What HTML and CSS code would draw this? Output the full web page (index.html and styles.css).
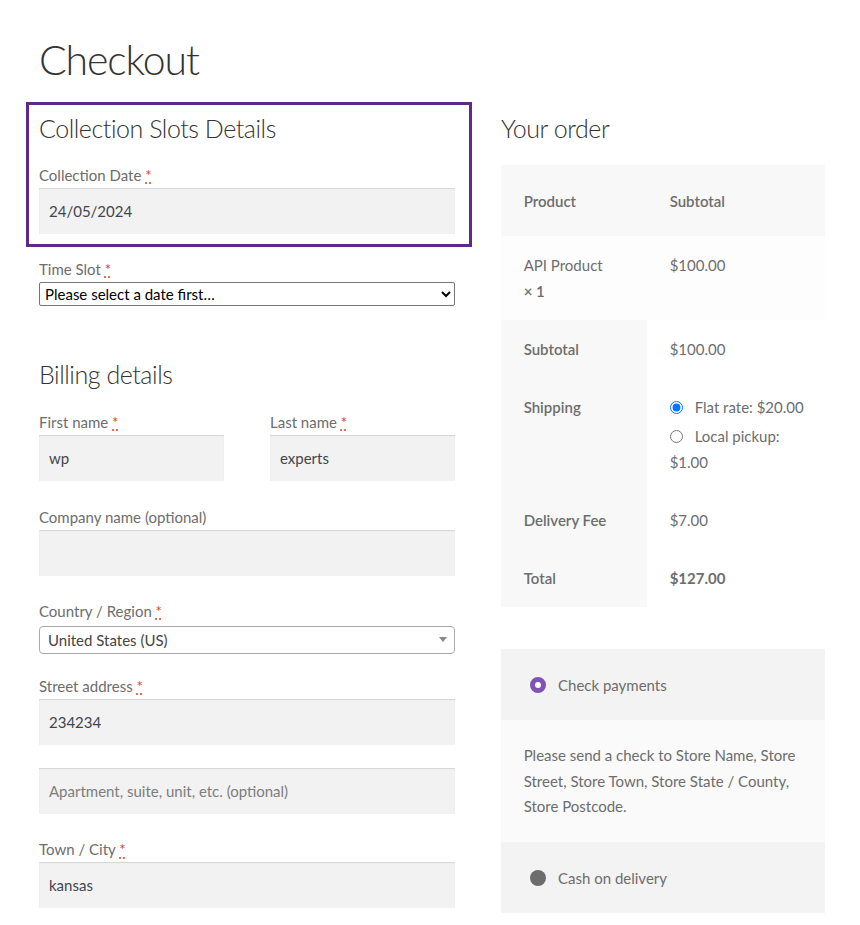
FILE: index.html
```html
<!DOCTYPE html>
<html lang="en">
<head>
<meta charset="utf-8">
<title>Checkout</title>
<link rel="stylesheet" href="styles.css">
</head>
<body>
<div class="page">
  <h1 class="page-title">Checkout</h1>
  <div class="cols">
    <div class="col-left">
      <div class="slots-box">
        <h3 class="section-title">Collection Slots Details</h3>
        <div class="form-row">
          <label class="field-label">Collection Date&nbsp;<abbr class="req" title="required">*</abbr></label>
          <div class="input">24/05/2024</div>
        </div>
      </div>
      <div class="form-row row-timeslot">
        <label class="field-label">Time Slot <abbr class="req" title="required">*</abbr></label>
        <select class="native-select"><option>Please select a date first…</option></select>
      </div>

      <h3 class="section-title billing-title">Billing details</h3>
      <div class="name-row">
        <div class="form-row">
          <label class="field-label">First name <abbr class="req" title="required">*</abbr></label>
          <div class="input">wp</div>
        </div>
        <div class="form-row">
          <label class="field-label">Last name <abbr class="req" title="required">*</abbr></label>
          <div class="input">experts</div>
        </div>
      </div>
      <div class="form-row">
        <label class="field-label">Company name (optional)</label>
        <div class="input"></div>
      </div>
      <div class="form-row row-country">
        <label class="field-label">Country / Region <abbr class="req" title="required">*</abbr></label>
        <div class="select2">
          <span class="select2-text">United States (US)</span>
          <span class="select2-arrow"></span>
        </div>
      </div>
      <div class="form-row row-street">
        <label class="field-label">Street address <abbr class="req" title="required">*</abbr></label>
        <div class="input">234234</div>
      </div>
      <div class="form-row">
        <div class="input placeholder">Apartment, suite, unit, etc. (optional)</div>
      </div>
      <div class="form-row">
        <label class="field-label">Town / City <abbr class="req" title="required">*</abbr></label>
        <div class="input">kansas</div>
      </div>
    </div>

    <div class="col-right">
      <h3 class="section-title order-title">Your order</h3>
      <table class="order-table">
        <thead>
          <tr><th class="c1">Product</th><th class="c2">Subtotal</th></tr>
        </thead>
        <tbody>
          <tr><td class="c1">API Product<br><strong class="qty">× 1</strong></td><td class="c2">$100.00</td></tr>
        </tbody>
        <tfoot>
          <tr><th>Subtotal</th><td>$100.00</td></tr>
          <tr>
            <th>Shipping</th>
            <td>
              <ul class="ship-list">
                <li><input type="radio" name="ship" checked><label>Flat rate: $20.00</label></li>
                <li><input type="radio" name="ship"><label>Local pickup: $1.00</label></li>
              </ul>
            </td>
          </tr>
          <tr><th>Delivery Fee</th><td>$7.00</td></tr>
          <tr><th>Total</th><td><strong>$127.00</strong></td></tr>
        </tfoot>
      </table>

      <div class="payment">
        <div class="pay-method">
          <span class="pay-radio selected"></span>
          <span>Check payments</span>
        </div>
        <div class="pay-box">Please send a check to Store Name, Store Street, Store Town, Store State / County, Store Postcode.</div>
        <div class="pay-method">
          <span class="pay-radio"></span>
          <span>Cash on delivery</span>
        </div>
      </div>
    </div>
  </div>
</div>
</body>
</html>
```

FILE: styles.css
```css
* { box-sizing: border-box; }

html, body {
  margin: 0;
  padding: 0;
  background: #fff;
}

body {
  font-family: "Lato", "Open Sans", sans-serif;
  font-size: 16px;
  line-height: 1.618;
  color: #6d6d6d;
}

.page {
  padding: 35px 0 0 39px;
  width: 860px;
}

.page-title {
  margin: 0 0 17px;
  font-size: 41px;
  line-height: 50px;
  font-weight: 300;
  color: #333;
  letter-spacing: -1.1px;
}

.cols {
  display: grid;
  grid-template-columns: 416px 324px;
  column-gap: 46px;
  align-items: start;
}

.section-title {
  margin: 0;
  font-size: 25px;
  line-height: 42px;
  font-weight: 300;
  color: #333;
  letter-spacing: -0.45px;
}

.slots-box {
  border: 3px solid #5f288b;
  margin: 0 -17px 0 -13px;
  padding: 2px 14px 10px 10px;
}

.slots-box .section-title {
  margin-bottom: 13px;
}

.form-row {
  margin-bottom: 22.6px;
}

.slots-box .form-row { margin-bottom: 0; }

.field-label {
  display: block;
  font-size: 15px;
  line-height: 26px;
  color: #6d6d6d;
}

.req {
  color: #e2401c;
  text-decoration: underline dotted;
  text-underline-offset: 2px;
  border: 0;
  cursor: help;
}

.input {
  height: 46px;
  padding: 10px;
  background: #f2f2f2;
  box-shadow: inset 0 1px 1px rgba(0,0,0,0.125);
  color: #43454b;
  font-size: 15px;
  line-height: 26px;
}

.input.placeholder { color: #7d7d7d; }

.row-timeslot {
  margin-top: 9px;
  margin-bottom: 47px;
}

.native-select {
  display: block;
  width: 416px;
  height: 24px;
  margin: 0;
  font-family: "Lato", "Open Sans", sans-serif;
  font-size: 15px;
  color: #000;
  background: #fff;
  border: 1px solid #767676;
  border-radius: 2px;
  padding: 0 1px;
}

.billing-title {
  margin-bottom: 14px;
}

.name-row {
  display: grid;
  grid-template-columns: 185px 185px;
  column-gap: 46px;
}

.row-country { margin-bottom: 19px; }

.select2 {
  margin-top: 2px;
  height: 28px;
  border: 1px solid #aaa;
  border-radius: 4px;
  background: #fff;
  display: flex;
  align-items: center;
  justify-content: space-between;
  padding: 0 7px 0 8px;
}

.select2-text {
  color: #444;
  font-size: 15px;
  line-height: 26px;
}

.select2-arrow {
  width: 0;
  height: 0;
  border-left: 4px solid transparent;
  border-right: 4px solid transparent;
  border-top: 5px solid #888;
  margin-top: -2px;
}

/* Right column */
.order-title {
  margin-top: 5px;
  margin-bottom: 16px;
}

.order-table {
  width: 324px;
  border-collapse: collapse;
  border-spacing: 0;
  font-size: 15px;
}

.order-table th,
.order-table td {
  padding: 16px 22.65px;
  text-align: left;
  vertical-align: top;
  line-height: 26px;
}

.order-table th { font-weight: 600; }

.order-table .c1 { width: 146px; }

.order-table thead th {
  padding: 22.65px;
  background: #f8f8f8;
  vertical-align: middle;
}

.order-table tbody td { background: #fdfdfd; }

.order-table tfoot th { background: #f8f8f8; }
.order-table tfoot td { background: #fff; }

.qty { font-weight: 600; }

.ship-list {
  list-style: none;
  margin: 0 -10px 0 0;
  padding: 0;
}

.ship-list li { margin-bottom: 3px; }
.ship-list li:last-child { margin-bottom: 0; }

.ship-list input {
  width: 13px;
  height: 13px;
  margin: 0 12px 0 0;
  vertical-align: -1px;
}

.payment {
  margin-top: 42px;
  font-size: 15px;
}

.pay-method {
  height: 71px;
  background: #f3f3f3;
  display: flex;
  align-items: center;
  padding-left: 29px;
  gap: 12px;
  line-height: 26px;
}

.pay-radio {
  width: 16px;
  height: 16px;
  border-radius: 50%;
  background: #6d6d6d;
  flex: none;
}

.pay-radio.selected {
  background: #fff;
  border: 5px solid #7f54b3;
}

.pay-box {
  background: #fafafa;
  padding: 22.65px;
  line-height: 25.6px;
}
```
